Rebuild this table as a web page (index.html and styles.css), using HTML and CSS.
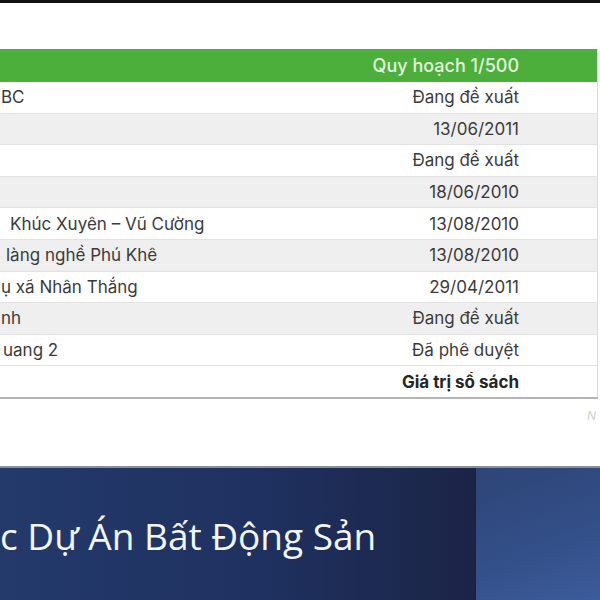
FILE: index.html
```html
<!DOCTYPE html>
<html lang="vi">
<head>
<meta charset="utf-8">
<title>Danh mục dự án</title>
<link rel="stylesheet" href="styles.css">
</head>
<body>
<div class="topbar"></div>
<main class="page">
  <div class="table-wrap">
    <table class="projects">
      <thead>
        <tr><th class="name"></th><th class="status">Quy hoạch 1/500</th></tr>
      </thead>
      <tbody>
        <tr><td class="name">BC</td><td class="status">Đang đề xuất</td></tr>
        <tr class="alt"><td class="name"></td><td class="status">13/06/2011</td></tr>
        <tr><td class="name"></td><td class="status">Đang đề xuất</td></tr>
        <tr class="alt"><td class="name"></td><td class="status">18/06/2010</td></tr>
        <tr><td class="name indent-lg">Khúc Xuyên – Vũ Cường</td><td class="status">13/08/2010</td></tr>
        <tr class="alt"><td class="name indent-md">làng nghề Phú Khê</td><td class="status">13/08/2010</td></tr>
        <tr><td class="name">ụ xã Nhân Thắng</td><td class="status">29/04/2011</td></tr>
        <tr class="alt"><td class="name">nh</td><td class="status">Đang đề xuất</td></tr>
        <tr><td class="name indent-sm">uang 2</td><td class="status">Đã phê duyệt</td></tr>
        <tr class="total"><td class="name"></td><td class="status">Giá trị sổ sách</td></tr>
      </tbody>
    </table>
  </div>
  <p class="note">N</p>
  <section class="banner">
    <div class="banner-main">
      <h1 class="banner-title">c Dự Án Bất Động Sản</h1>
    </div>
    <div class="banner-side"></div>
  </section>
</main>
</body>
</html>
```
FILE: styles.css
```css
html, body {
  margin: 0;
  padding: 0;
  background: #ffffff;
  overflow: hidden;
  height: 600px;
}

body {
  font-family: "Inter", "Liberation Sans", sans-serif;
  color: #3b3b3b;
}

.topbar {
  height: 3px;
  background: #111111;
}

.page {
  padding-top: 46px;
}

.table-wrap {
  width: 598px;
}

.projects {
  border-collapse: collapse;
  width: 598px;
  table-layout: fixed;
  border-right: 1px solid #dcdcdc;
}

.projects th {
  background: #4caf3b;
  color: #e6f5df;
  font-weight: 500;
  font-size: 18px;
  height: 33px;
  padding: 0;
}

.projects td {
  height: 30.6px;
  padding: 0;
  font-size: 17px;
  border-bottom: 1px solid #e2e2e2;
  white-space: nowrap;
}

.projects .name {
  width: 300px;
  text-align: left;
}

.projects td.name {
  padding-left: 1px;
}

.projects td.indent-sm {
  padding-left: 3px;
}

.projects td.indent-md {
  padding-left: 6px;
}

.projects td.indent-lg {
  padding-left: 10px;
}

.projects .status {
  text-align: right;
  padding-right: 78px;
}

.projects tr.alt td {
  background: #efefef;
}

.projects tr.total td {
  font-weight: 700;
  color: #262626;
  border-bottom: 2px solid #b5b5b5;
}

.note {
  margin: 10px 4px 0 0;
  text-align: right;
  font-size: 12px;
  font-style: italic;
  color: #d0d0d0;
  height: 14px;
  line-height: 14px;
}

.banner {
  margin-top: 43px;
  display: flex;
  height: 134px;
  border-top: 2px solid #8a8f9c;
}

.banner-main {
  width: 475px;
  background: linear-gradient(90deg, #233a6b 0%, #1f3160 55%, #1b2446 100%);
}

.banner-side {
  flex: 1;
  background: linear-gradient(160deg, #2d4576 0%, #34508a 60%, #3c5c9b 100%);
  border-left: 1px solid #18213d;
}

.banner-title {
  margin: 42px 0 0 0;
  font-family: "Open Sans", "Noto Sans", sans-serif;
  font-weight: 400;
  font-size: 37px;
  color: #f4f6fb;
  white-space: nowrap;
}
```
